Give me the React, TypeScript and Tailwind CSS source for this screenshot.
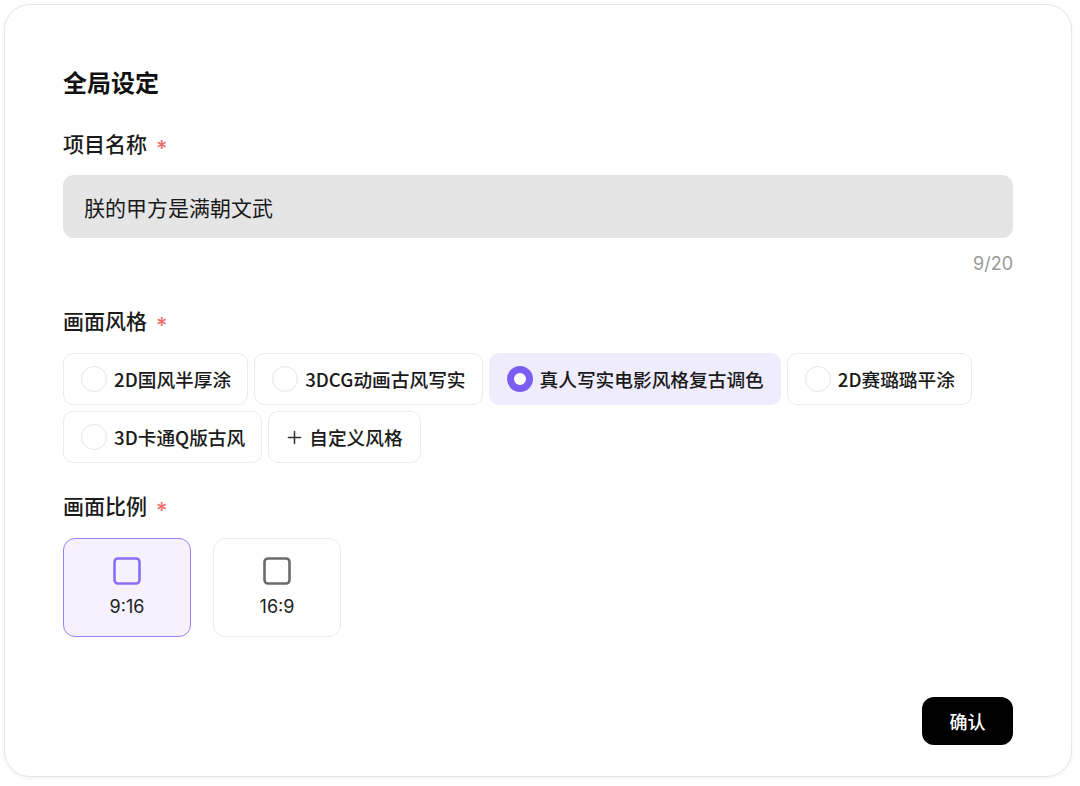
import React from "react";

const FONT = { fontFamily: '"Noto Sans CJK SC", "Noto Sans", sans-serif' };
const LATIN = { fontFamily: 'Inter, "Noto Sans CJK SC", sans-serif' };

function Label({ text }: { text: string }) {
  return (
    <div className="flex items-center h-[28px] text-[21px] font-medium text-[#1a1a1a] leading-[28px]">
      <span>{text}</span>
      <span
        className="ml-[9px] text-[#f26d6d] font-medium text-[22px] leading-[28px] translate-y-[5px]"
        style={LATIN}
      >
        *
      </span>
    </div>
  );
}

function Chip({ label, selected = false }: { label: string; selected?: boolean }) {
  return (
    <div
      className={
        selected
          ? "flex items-center h-[52px] pl-[17px] pr-[16px] rounded-[10px] bg-[#efecfd] border border-[#efecfd]"
          : "flex items-center h-[52px] pl-[17px] pr-[16px] rounded-[10px] bg-white border border-[#ebebeb]"
      }
    >
      {selected ? (
        <span className="w-[26px] h-[26px] rounded-full border-[7px] border-[#7d5ef3] bg-white shrink-0" />
      ) : (
        <span className="w-[26px] h-[26px] rounded-full border border-[#e6e6e6] bg-white shrink-0" />
      )}
      <span className="ml-[7px] text-[18.7px] font-medium text-[#1a1a1a] leading-[26px]">{label}</span>
    </div>
  );
}

function Ratio({ label, selected = false }: { label: string; selected?: boolean }) {
  return (
    <div
      className={
        selected
          ? "flex flex-col items-center w-[128px] h-[99px] rounded-[12px] border border-[#9d80f5] bg-[#f5f2fe] pt-[18px]"
          : "flex flex-col items-center w-[128px] h-[99px] rounded-[12px] border border-[#ebebeb] bg-white pt-[18px]"
      }
    >
      <svg width="28" height="28" viewBox="0 0 28 28">
        <rect
          x="1.5"
          y="1.5"
          width="25"
          height="25"
          rx="3.5"
          fill="none"
          stroke={selected ? "#8d6cf5" : "#6b6b6b"}
          strokeWidth="2.6"
        />
      </svg>
      <span className="mt-[10px] text-[18px] text-[#222] leading-[24px]" style={LATIN}>
        {label}
      </span>
    </div>
  );
}

export default function App() {
  return (
    <div className="w-[1080px] h-[786px] bg-white pt-[4px] pl-[4px]" style={FONT}>
      <div className="w-[1068px] h-[773px] rounded-[26px] border border-[#e6e6e6] bg-white shadow-[0_1px_4px_rgba(0,0,0,0.06)] flex flex-col px-[58px] pt-[61px] pb-[31px]">
        <div className="text-[24px] font-bold text-[#111] leading-[32px]">全局设定</div>

        <div className="mt-[31px]">
          <Label text="项目名称" />
        </div>

        <div className="mt-[18px] h-[63px] rounded-[11px] bg-[#e5e5e5] flex items-center px-[21px]">
          <span className="text-[21px] text-[#1a1a1a] leading-[28px]">朕的甲方是满朝文武</span>
        </div>

        <div className="mt-[14px] flex justify-end">
          <span className="text-[18px] text-[#9a9a9a] leading-[24px]" style={LATIN}>
            9/20
          </span>
        </div>

        <div className="mt-[30px]">
          <Label text="画面风格" />
        </div>

        <div className="mt-[19px] flex flex-wrap gap-x-[6px] gap-y-[6px] w-[920px]">
          <Chip label="2D国风半厚涂" />
          <Chip label="3DCG动画古风写实" />
          <Chip label="真人写实电影风格复古调色" selected />
          <Chip label="2D赛璐璐平涂" />
          <Chip label="3D卡通Q版古风" />
          <div className="flex items-center h-[52px] pl-[18px] pr-[17px] rounded-[10px] bg-white border border-[#ebebeb]">
            <svg width="15" height="15" viewBox="0 0 16 16" className="shrink-0">
              <path d="M8 1.5v13M1.5 8h13" stroke="#333" strokeWidth="1.6" strokeLinecap="round" />
            </svg>
            <span className="ml-[7px] text-[18.7px] font-medium text-[#1a1a1a] leading-[26px]">自定义风格</span>
          </div>
        </div>

        <div className="mt-[28px]">
          <Label text="画面比例" />
        </div>

        <div className="mt-[19px] flex gap-[22px]">
          <Ratio label="9:16" selected />
          <Ratio label="16:9" />
        </div>

        <div className="mt-auto flex justify-end">
          <button className="w-[91px] h-[48px] rounded-[12px] bg-black text-white text-[18px] font-medium leading-[24px]">
            确认
          </button>
        </div>
      </div>
    </div>
  );
}
